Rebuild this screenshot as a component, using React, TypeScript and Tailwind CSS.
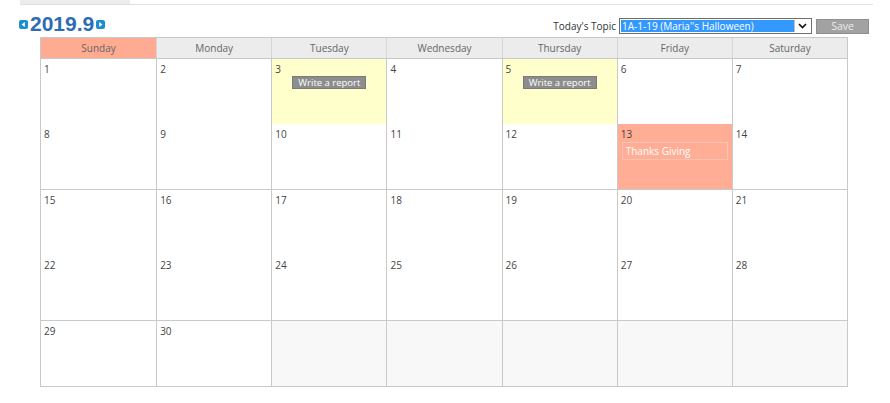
import React from "react";

const days = ["Sunday", "Monday", "Tuesday", "Wednesday", "Thursday", "Friday", "Saturday"];

type Cell = { n?: number; kind?: "report" | "holiday" };

const weeks: Cell[][] = [
  [{ n: 1 }, { n: 2 }, { n: 3, kind: "report" }, { n: 4 }, { n: 5, kind: "report" }, { n: 6 }, { n: 7 }],
  [{ n: 8 }, { n: 9 }, { n: 10 }, { n: 11 }, { n: 12 }, { n: 13, kind: "holiday" }, { n: 14 }],
  [{ n: 15 }, { n: 16 }, { n: 17 }, { n: 18 }, { n: 19 }, { n: 20 }, { n: 21 }],
  [{ n: 22 }, { n: 23 }, { n: 24 }, { n: 25 }, { n: 26 }, { n: 27 }, { n: 28 }],
  [{ n: 29 }, { n: 30 }, {}, {}, {}, {}, {}],
];

function Arrow({ dir }: { dir: "l" | "r" }) {
  return (
    <svg width="9" height="9" viewBox="0 0 9 9" className="mt-[7px]">
      <rect x="0" y="0" width="9" height="9" rx="2" fill="#1b8fcf" />
      {dir === "l" ? (
        <polygon points="5.8,2 5.8,7 2.6,4.5" fill="#fff" />
      ) : (
        <polygon points="3.2,2 3.2,7 6.4,4.5" fill="#fff" />
      )}
    </svg>
  );
}

function DayCell({ c, i }: { c: Cell; i: number }) {
  let bg = "bg-white";
  if (c.n === undefined) bg = "bg-[#f8f8f8]";
  if (c.kind === "report") bg = "bg-[#ffffcc]";
  if (c.kind === "holiday") bg = "bg-[#ffae95]";
  return (
    <div className={`${bg} ${i > 0 ? "border-l border-[#c9c9c9]" : ""} h-[65px] flex flex-col px-[3px] pt-[3px]`}>
      {c.n !== undefined && (
        <span className="text-[10px] leading-[14px] text-[#444]">{c.n}</span>
      )}
      {c.kind === "report" && (
        <div className="self-center h-[13px] px-[5px] bg-[#8d8d8d] border border-[#7a7a7a] text-white text-[9.5px] leading-[11px]">
          Write a report
        </div>
      )}
      {c.kind === "holiday" && (
        <div className="mt-[1px] mx-[1px] h-[18px] border border-[#f5c4b2] text-white text-[10px] leading-[16px] px-[3px]">
          Thanks Giving
        </div>
      )}
    </div>
  );
}

export default function App() {
  return (
    <div className="w-[890px] h-[403px] bg-white font-['Open_Sans','DejaVu_Sans',sans-serif]">
      <div className="ml-[20px] w-[853px] border-b border-[#e0e0e0] flex">
        <div className="w-[110px] h-[4px] bg-[#ececec]"></div>
      </div>

      <div className="ml-[19px] w-[850px] flex items-end justify-between mt-[8px]">
        <div className="flex items-start gap-[2px]">
          <Arrow dir="l" />
          <span className="font-['Liberation_Sans',sans-serif] font-bold text-[21px] leading-[22px] text-[#2d6cb5]">2019.9</span>
          <Arrow dir="r" />
        </div>
        <div className="flex items-center mb-[1px]">
          <span className="text-[10px] text-[#333] mr-[3px]">Today's Topic</span>
          <div className="w-[193px] h-[16px] border border-[#6e6e6e] bg-white flex items-center p-[1px]">
            <div className="flex-1 h-full bg-[#3399ff] text-white text-[10px] leading-[12px] pl-[1px]">
              1A-1-19 (Maria''s Halloween)
            </div>
            <div className="w-[16px] h-full flex items-center justify-center border-l border-[#c0c0c0]">
              <svg width="9" height="6" viewBox="0 0 9 6">
                <polyline points="1,1 4.5,4.5 8,1" fill="none" stroke="#111" strokeWidth="1.6" />
              </svg>
            </div>
          </div>
          <div className="ml-[4px] w-[53px] h-[15px] bg-[#a2a2a2] border border-[#8f8f8f] text-[#ececec] text-[10.5px] leading-[13px] text-center">
            Save
          </div>
        </div>
      </div>

      <div className="ml-[40px] mt-[2px] w-[808px] border border-[#c9c9c9]">
        <div className="grid grid-cols-7 border-b border-[#c9c9c9]">
          {days.map((d, i) => (
            <div
              key={d}
              className={`${i === 0 ? "bg-[#ffab92]" : "bg-[#ececec] border-l border-[#d6d6d6]"} h-[20px] text-center text-[10px] leading-[20px] text-[#666]`}
            >
              {d}
            </div>
          ))}
        </div>
        {weeks.map((w, wi) => (
          <div key={wi} className={`grid grid-cols-7 ${wi === 2 || wi === 4 ? "border-t border-[#c9c9c9]" : ""}`}>
            {w.map((c, i) => (
              <DayCell key={i} c={c} i={i} />
            ))}
          </div>
        ))}
      </div>
    </div>
  );
}
